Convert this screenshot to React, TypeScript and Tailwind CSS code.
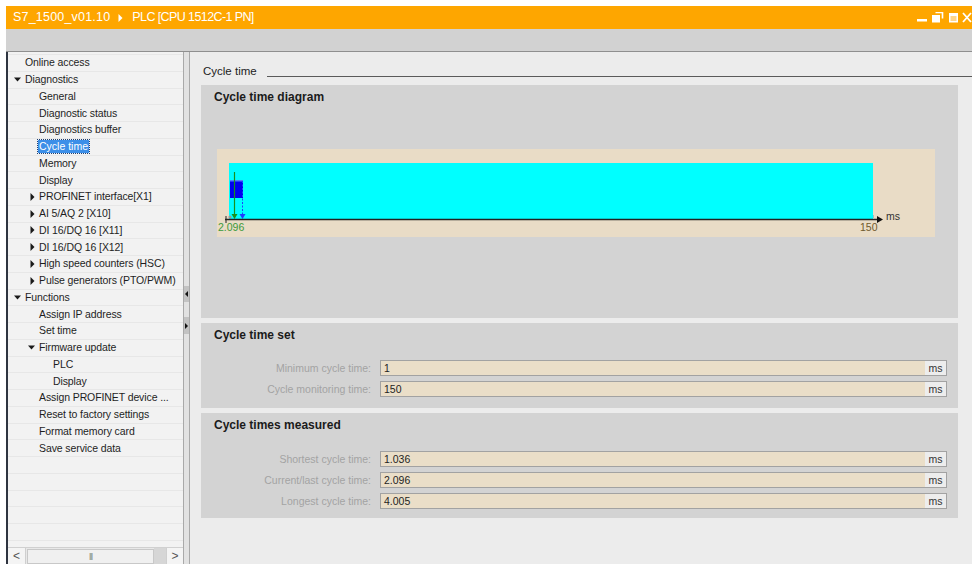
import type { ReactNode } from 'react';

type NavRow = {
  label: string;
  level: number;
  arrow?: 'down' | 'right';
  selected?: boolean;
};

const navRows: NavRow[] = [
  { label: 'Online access', level: 0 },
  { label: 'Diagnostics', level: 0, arrow: 'down' },
  { label: 'General', level: 1 },
  { label: 'Diagnostic status', level: 1 },
  { label: 'Diagnostics buffer', level: 1 },
  { label: 'Cycle time', level: 1, selected: true },
  { label: 'Memory', level: 1 },
  { label: 'Display', level: 1 },
  { label: 'PROFINET interface[X1]', level: 1, arrow: 'right' },
  { label: 'AI 5/AQ 2 [X10]', level: 1, arrow: 'right' },
  { label: 'DI 16/DQ 16 [X11]', level: 1, arrow: 'right' },
  { label: 'DI 16/DQ 16 [X12]', level: 1, arrow: 'right' },
  { label: 'High speed counters (HSC)', level: 1, arrow: 'right' },
  { label: 'Pulse generators (PTO/PWM)', level: 1, arrow: 'right' },
  { label: 'Functions', level: 0, arrow: 'down' },
  { label: 'Assign IP address', level: 1 },
  { label: 'Set time', level: 1 },
  { label: 'Firmware update', level: 1, arrow: 'down' },
  { label: 'PLC', level: 2 },
  { label: 'Display', level: 2 },
  { label: 'Assign PROFINET device ...', level: 1 },
  { label: 'Reset to factory settings', level: 1 },
  { label: 'Format memory card', level: 1 },
  { label: 'Save service data', level: 1 },
];

const indent = ['pl-[17px]', 'pl-[31px]', 'pl-[45px]'];
const arrowIndent = ['pl-[6px]', 'pl-[20px]', 'pl-[34px]'];

const Arrow = ({ dir }: { dir: 'down' | 'right' }) => (
  <span className="w-[11px] flex items-center">
    {dir === 'down' ? (
      <svg width="7" height="5" viewBox="0 0 7 5">
        <path d="M0 0.5 L7 0.5 L3.5 4.5 Z" fill="#1a1a1a" />
      </svg>
    ) : (
      <svg width="5" height="8" viewBox="0 0 5 8" className="ml-[2px]">
        <path d="M0.5 0 L4.5 4 L0.5 8 Z" fill="#1a1a1a" />
      </svg>
    )}
  </span>
);

const NavItem = ({ row }: { row: NavRow }) => (
  <div
    className={`h-[16.75px] shrink-0 flex items-center border-b border-[#e7e7e7] ${
      row.arrow ? arrowIndent[row.level] : indent[row.level]
    }`}
  >
    {row.arrow && <Arrow dir={row.arrow} />}
    <span
      className={
        row.selected
          ? '-ml-[1px] px-[1px] leading-[13px] bg-[#3c8fe8] text-white outline-1 outline-dotted outline-[#1d3f73]'
          : 'leading-[13px] text-[#1e1e1e] tracking-[-0.1px]'
      }
    >
      {row.label}
    </span>
  </div>
);

const TitleButtons = () => (
  <svg width="56" height="11" viewBox="0 0 56 11" className="ml-auto">
    <rect x="1" y="7" width="10" height="2.5" fill="#fff" />
    <path d="M19.5 0.5 h7 v6" stroke="#fff" strokeWidth="1.6" fill="none" />
    <rect x="16" y="3" width="8" height="7.5" fill="#fff" />
    <rect x="33" y="1" width="9" height="9.5" fill="#fff" />
    <rect x="34.5" y="4" width="6" height="5" fill="#ffd58a" />
    <path d="M47 1 L55 10 M55 1 L47 10" stroke="#fff" strokeWidth="1.8" />
  </svg>
);

const Panel = ({ title, className, children }: { title: string; className: string; children: ReactNode }) => (
  <div className={`bg-[#d3d3d3] mr-[14px] flex flex-col pt-[5px] ${className}`}>
    <div className="pl-[13px] leading-[14px] text-[12px] font-bold text-[#1b1b1b]">{title}</div>
    {children}
  </div>
);

const ValueRow = ({ label, value }: { label: string; value: string }) => (
  <div className="flex h-[16px] items-center">
    <div className="w-[170px] text-right text-[#a3a3a3] leading-[16px]">{label}</div>
    <div className="ml-[9px] mr-[11px] flex-1 h-[16px] flex border border-[#a2a2a2]">
      <div className="flex-1 bg-[#eadec8] pl-[3px] leading-[14px] text-[#1e1e1e]">{value}</div>
      <div className="w-[21px] bg-[#ededed] text-center leading-[14px] text-[#333]">ms</div>
    </div>
  </div>
);

// beige box with the cyan range, current value marker and axis
const CycleDiagram = () => (
  <div className="ml-[16px] mt-[45px] w-[718px] h-[88px] bg-[#e9dcc6]">
    <svg width="718" height="88" viewBox="0 0 718 88" fontFamily="'Liberation Sans', Arial, sans-serif">
      <rect x="12" y="14" width="644" height="56" fill="#00ffff" />
      <rect x="13" y="31" width="13" height="18" fill="#0000f0" />
      <rect x="13" y="31" width="13" height="1.5" fill="#4f7dff" />
      <line x1="25.5" y1="32" x2="25.5" y2="66" stroke="#1f3dff" strokeWidth="1" strokeDasharray="2 1.5" />
      <path d="M22.5 65 L28.5 65 L25.5 70 Z" fill="#1f3dff" />
      <line x1="17.5" y1="23" x2="17.5" y2="66" stroke="#19901f" strokeWidth="1.2" />
      <path d="M14.5 65 L20.5 65 L17.5 70 Z" fill="#19901f" />
      <circle cx="13" cy="68" r="1.6" fill="#9a9a9a" />
      <line x1="8" y1="70.5" x2="661" y2="70.5" stroke="#222" strokeWidth="1.4" />
      <line x1="9" y1="67" x2="9" y2="74" stroke="#222" strokeWidth="1" />
      <line x1="656.5" y1="66" x2="656.5" y2="70" stroke="#9fbfbf" strokeWidth="1" />
      <path d="M660 67 L666 70.5 L660 74 Z" fill="#111" />
      <text x="669" y="71" fontSize="10.5" fill="#333">ms</text>
      <text x="1" y="82" fontSize="10.5" fill="#3c9a3c">2.096</text>
      <text x="643" y="82" fontSize="10.5" fill="#6f5a2c">150</text>
    </svg>
  </div>
);

const App = () => {
  return (
    <div className="w-[972px] h-[564px] overflow-hidden bg-white pt-[6px] pl-[6px] text-[10.5px] font-['Liberation_Sans',Arial,sans-serif]">
      <div className="h-[558px] flex flex-col">
        {/* window title */}
        <div className="h-[23px] shrink-0 bg-[#fea600] flex items-center pl-[7px] text-white text-[12.5px]">
          <span className="tracking-[0.2px]">S7_1500_v01.10</span>
          <svg width="5" height="8" viewBox="0 0 5 8" className="mx-[8px]">
            <path d="M0.5 0 L4.5 4 L0.5 8 Z" fill="#fff" />
          </svg>
          <span className="ml-[1px] tracking-[-0.6px]">PLC [CPU 1512C-1 PN]</span>
          <TitleButtons />
        </div>

        {/* toolbar */}
        <div className="h-[23px] shrink-0 bg-[#d2d2d2] border-b border-[#8f8f8f]" />

        <div className="flex-1 flex min-h-0">
          {/* navigation tree */}
          <div className="w-[177px] shrink-0 border-l-2 border-[#2e3440] bg-[#f2f2f2] flex flex-col">
            <div className="flex-1 min-h-0 overflow-hidden pt-[2px] flex flex-col">
              <div className="border-t border-[#e7e7e7]" />
              {navRows.map((row, i) => (
                <NavItem key={i} row={row} />
              ))}
              {Array.from({ length: 8 }).map((_, i) => (
                <div key={i} className="h-[16.75px] shrink-0 border-b border-[#e7e7e7]" />
              ))}
            </div>
            <div className="h-[17px] shrink-0 flex items-center bg-[#e8e8e8] border-t border-[#d0d0d0]">
              <div className="w-[18px] h-full flex items-center justify-center text-[#555] text-[12px] leading-none bg-[#f4f4f4] border-r border-[#cfcfcf]">
                &lt;
              </div>
              <div className="ml-[1px] w-[127px] h-[15px] bg-[#f0f0f0] border border-[#c8c8c8] flex items-center justify-center text-[#777] text-[8px] tracking-[-1px]">
                |||
              </div>
              <div className="flex-1 h-full bg-[#d6d6d6]" />
              <div className="w-[17px] h-full flex items-center justify-center text-[#555] text-[12px] leading-none bg-[#f4f4f4] border-l border-[#cfcfcf]">
                &gt;
              </div>
            </div>
          </div>

          {/* splitter */}
          <div className="w-[7px] shrink-0 border-x border-[#a9a9a9] bg-[#e2e2e2] flex flex-col">
            <div className="mt-[234px] h-[16px] bg-[#c3c3c3] flex items-center justify-center">
              <svg width="3" height="6" viewBox="0 0 3 6">
                <path d="M3 0 L0 3 L3 6 Z" fill="#111" />
              </svg>
            </div>
            <div className="mt-[15px] h-[17px] bg-[#c3c3c3] flex items-center justify-center">
              <svg width="3" height="6" viewBox="0 0 3 6">
                <path d="M0 0 L3 3 L0 6 Z" fill="#111" />
              </svg>
            </div>
          </div>

          {/* content */}
          <div className="flex-1 bg-[#ececec] pl-[11px] flex flex-col">
            <div className="mt-[11px] mb-[6px] h-[16px] pl-[2px] flex items-end">
              <span className="text-[11.5px] leading-[16px] text-[#222]">Cycle time</span>
              <div className="flex-1 ml-[10px] mb-[2px] h-px bg-[#5a5a5a]" />
            </div>

            <Panel title="Cycle time diagram" className="h-[233px]">
              <CycleDiagram />
            </Panel>

            <Panel title="Cycle time set" className="mt-[5px] h-[85px]">
              <div className="mt-[18px] flex flex-col gap-[5px]">
                <ValueRow label="Minimum cycle time:" value="1" />
                <ValueRow label="Cycle monitoring time:" value="150" />
              </div>
            </Panel>

            <Panel title="Cycle times measured" className="mt-[5px] h-[105px]">
              <div className="mt-[19px] flex flex-col gap-[5px]">
                <ValueRow label="Shortest cycle time:" value="1.036" />
                <ValueRow label="Current/last cycle time:" value="2.096" />
                <ValueRow label="Longest cycle time:" value="4.005" />
              </div>
            </Panel>
          </div>
        </div>
      </div>
    </div>
  );
};

export default App;
